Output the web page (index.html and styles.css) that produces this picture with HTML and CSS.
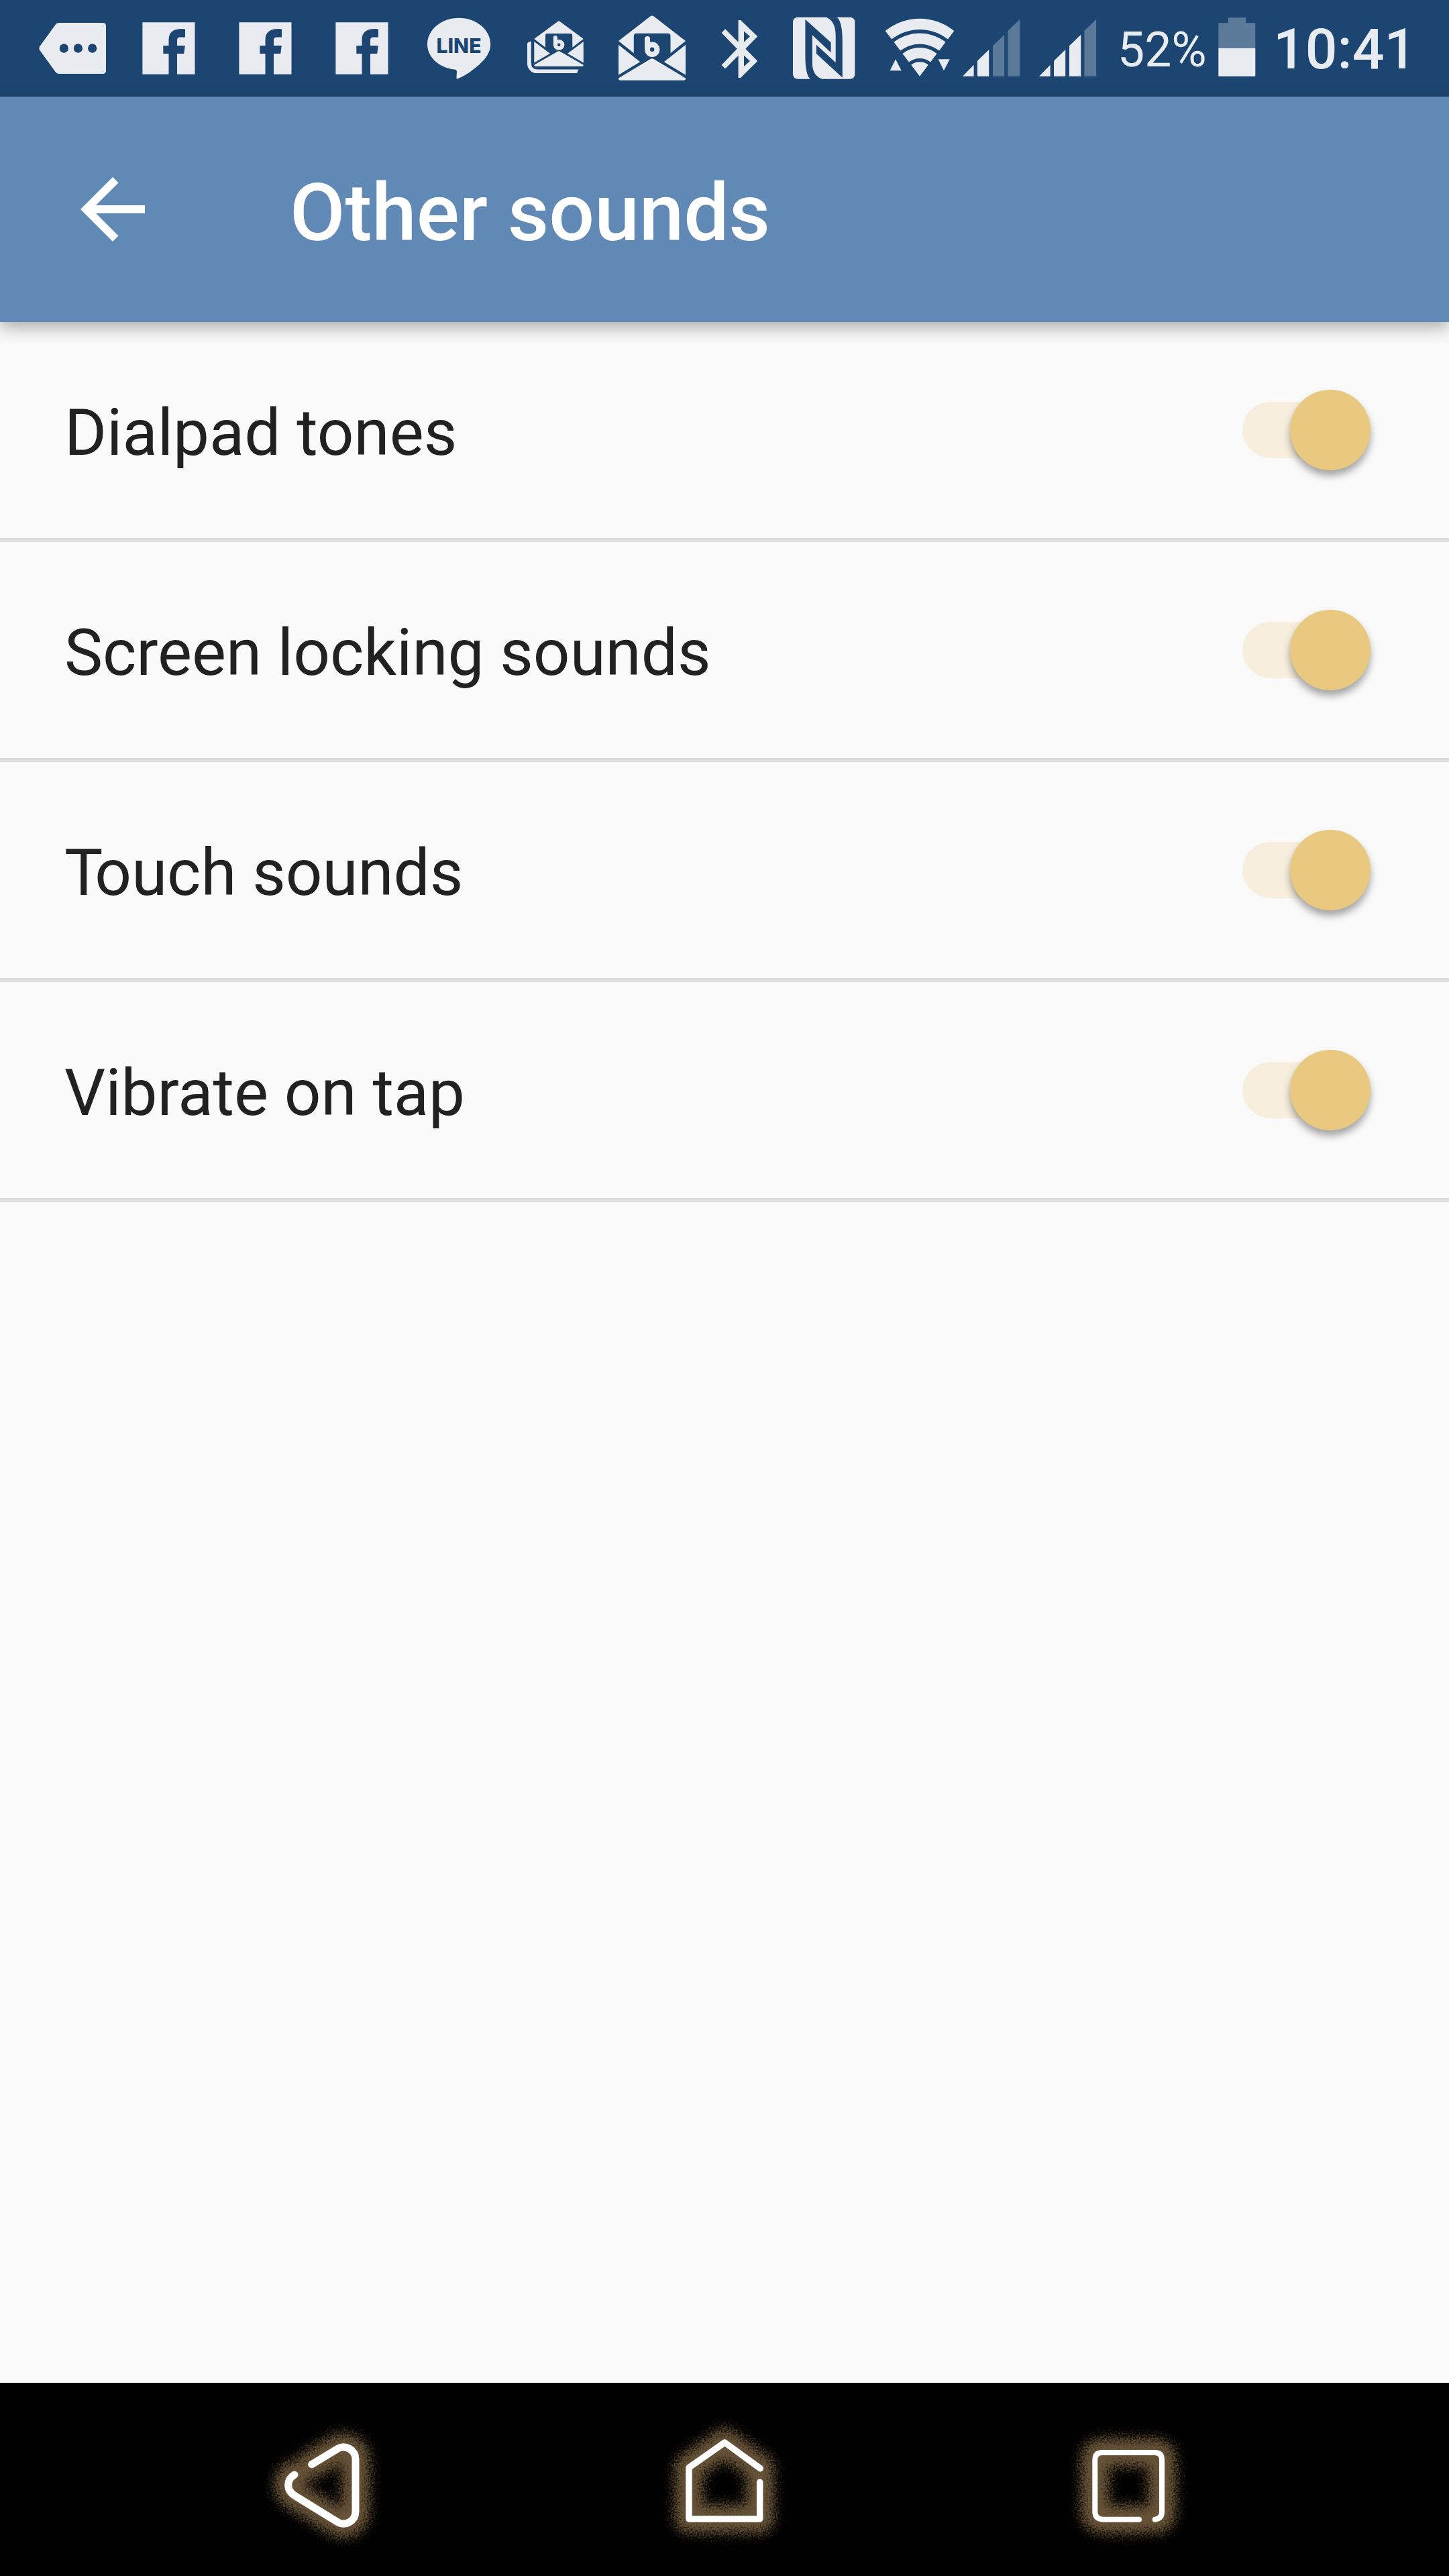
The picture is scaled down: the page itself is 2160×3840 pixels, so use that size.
FILE: index.html
```html
<!DOCTYPE html>
<html lang="en">
<head>
  <meta charset="UTF-8">
  <meta name="viewport" content="width=device-width, initial-scale=1.0">
  <title>Other sounds</title>
  <link rel="stylesheet" href="styles.css">
</head>
<body>
<svg class="defs" width="0" height="0">
  <defs>
    <symbol id="facebook" viewBox="0 0 144 144">
      <path d="M32.4 33.2H110.5V110.8H84V80H94.2L95.8 68H84V60Q84 55.5 88.5 55.5H96V43.4Q92 42.8 87 43.3Q71.5 45 71.5 59V68H63.3V80H71.5V110.8H32.4Z"/>
    </symbol>
    <symbol id="mail" viewBox="0 0 144 144">
      <path d="M22 61L69.5 24.3Q72 22.5 74.5 24.3L122 61L99.5 79.3V54Q99.5 49.8 95 49.8H49Q44.8 49.8 44.8 54V79.3Z"/>
      <path d="M22 66.7L54.2 92.3L22 111.7ZM122 66.7L89.8 92.3L122 111.7Z"/>
      <path d="M22 116.5L69.5 88Q72 86.4 74.5 88L122 116.5Q122 119.7 119.5 119.7H24.5Q22 119.7 22 116.5Z"/>
      <path class="mail-mark" d="M65 58V74"/>
      <ellipse class="mail-mark" cx="72.2" cy="73.8" rx="7.2" ry="7.2"/>
    </symbol>
    <symbol id="signal" viewBox="0 0 114 144">
      <path d="M5 113.8L21.6 96.7V113.8ZM27 113.8V90.7L44.2 74V113.8Z"/>
      <path class="bar-three" d="M50 113.8V68.3L67.2 51.7V113.8Z"/>
      <path class="dim" d="M72.4 113.8V46L90.2 29V113.8Z"/>
    </symbol>
    <!-- grainy halo behind the navigation icons -->
    <filter id="glow" filterUnits="userSpaceOnUse" x="0" y="0" width="240" height="288" color-interpolation-filters="sRGB">
      <feGaussianBlur in="SourceGraphic" stdDeviation="8" result="soft"/>
      <feTurbulence type="fractalNoise" baseFrequency="0.4" numOctaves="2" seed="4" result="noise"/>
      <feDisplacementMap in="soft" in2="noise" scale="32" xChannelSelector="R" yChannelSelector="G"/>
    </filter>
  </defs>
</svg>

<div class="screen">
  <div class="status-bar">
    <svg class="status-icon" viewBox="0 0 144 144">
      <path d="M52 34H117Q122 34 122 39V105Q122 110 117 110H52Q48.5 110 46.5 107L23 74.5Q21.5 72 23 69.5L46.5 37Q48.5 34 52 34Z"/>
      <g class="cut">
        <ellipse cx="59.3" cy="72" rx="6.6" ry="6.8"/>
        <ellipse cx="80.4" cy="72" rx="6.6" ry="6.8"/>
        <ellipse cx="101.7" cy="72" rx="6.6" ry="6.8"/>
      </g>
    </svg>
    <svg class="status-icon"><use href="#facebook"/></svg>
    <svg class="status-icon"><use href="#facebook"/></svg>
    <svg class="status-icon"><use href="#facebook"/></svg>
    <svg class="status-icon" viewBox="0 0 144 144">
      <path d="M72 26.7C98 26.7 119.2 44 119.2 66C119.2 74 116 81 110 88.5C101 99 84 112 70.5 117.3Q68.3 118 68.4 116L69 107Q69 104 65.5 103.5C42 101 25 85 25 66C25 44 46 26.7 72 26.7Z"/>
      <text class="line-text cut" x="38.5" y="78.8" textLength="67" lengthAdjust="spacingAndGlyphs">LINE</text>
    </svg>
    <svg class="status-icon" viewBox="0 0 144 144">
      <use href="#mail" width="144" height="144" transform="translate(24.1 15.2) scale(.735 .7)"/>
      <path d="M30 65Q30 63 35.7 61.5V93Q35.7 103.5 45 103.5H106.5L104 109H43Q37 109 33.5 104Q30 100 30 95Z"/>
    </svg>
    <svg class="status-icon"><use href="#mail"/></svg>
    <svg class="status-icon bluetooth" viewBox="0 0 116 144">
      <path fill-rule="evenodd" d="M56.6 30H60L85.3 54.3L67.3 72.7L85.3 91L60 116H56.6V82.7L37 102.6L31.6 97L54.7 72.7L31.6 49L37 43.2L56.6 62.7ZM65 46.7V62.7L74 54.3ZM65 82.7V99L74 91Z"/>
    </svg>
    <svg class="status-icon nfc" viewBox="0 0 140 144">
      <rect x="22" y="25.8" width="92.4" height="92" rx="7"/>
      <path class="cut" d="M40.4 29L78.6 63.3V78.3L50.9 52.3V94Q50.9 113 66 118H48.1Q40.4 112 40.4 83.3Z"/>
      <path class="cut" d="M71.1 25.5Q85.7 31 85.7 53V93.3L56.9 66.7V80L95.8 115.7V62Q95.8 31 87 25.5Z"/>
    </svg>
    <svg class="status-icon wifi" viewBox="0 0 130 144">
      <path d="M19.7 46A81 81 0 0 1 122.3 46L113 58.6A67 67 0 0 0 29.2 58.6Z"/>
      <path d="M32.5 62.7A63 63 0 0 1 109.5 62.7L100.1 75.6A47 47 0 0 0 42.1 75.6Z"/>
      <path d="M45.4 80A40.6 40.6 0 0 1 96.6 80L87.1 92.6A25.6 25.6 0 0 0 55 92.6Z"/>
      <path d="M58.2 96.7A20.5 20.5 0 0 1 83.8 96.7L71 113.8Z"/>
      <path d="M35 88.3L43.7 105.3H26.7ZM98.6 88.2H115.8L107 105.3Z"/>
    </svg>
    <svg class="status-icon signal signal-weak"><use href="#signal"/></svg>
    <svg class="status-icon signal"><use href="#signal"/></svg>
    <span class="battery-text">52%</span>
    <svg class="status-icon battery" viewBox="0 0 76 144">
      <path class="dim" d="M24.7 26.2H51.2V34.3H65.3V72H10.3V34.3H24.7Z"/>
      <rect x="10.3" y="71.8" width="55" height="42"/>
    </svg>
    <span class="clock">10:41</span>
  </div>

  <header class="app-bar">
    <svg class="back-arrow" viewBox="0 0 24 24">
      <path d="M20 11H7.83l5.59-5.59L12 4l-8 8 8 8 1.41-1.41L7.83 13H20v-2z"/>
    </svg>
    <h1 class="title">Other sounds</h1>
  </header>

  <main class="settings">
    <div class="setting">
      <span class="label">Dialpad tones</span>
      <span class="switch"><span class="thumb"></span></span>
    </div>
    <div class="setting">
      <span class="label">Screen locking sounds</span>
      <span class="switch"><span class="thumb"></span></span>
    </div>
    <div class="setting">
      <span class="label"><span class="kern">T</span>ouch sounds</span>
      <span class="switch"><span class="thumb"></span></span>
    </div>
    <div class="setting">
      <span class="label">Vibrate on tap</span>
      <span class="switch"><span class="thumb"></span></span>
    </div>
  </main>

  <nav class="nav-bar">
    <svg class="nav-icon nav-back" viewBox="0 0 240 288">
      <defs>
        <path id="nav-back" d="M104.7 121.7L143 98.5C155 91.5 170 100 170 114V192C170 206 155 214.5 143 207.5L79 168C67 160.5 66 145 79 137"/>
      </defs>
      <use class="halo" href="#nav-back"/>
      <use class="line" href="#nav-back"/>
    </svg>
    <svg class="nav-icon nav-home" viewBox="0 0 240 288">
      <defs>
        <path id="nav-home" d="M172.7 148V203H67V126.3L120.3 89L173.3 127.7"/>
      </defs>
      <use class="halo" href="#nav-home"/>
      <use class="line" href="#nav-home"/>
    </svg>
    <svg class="nav-icon nav-recent" viewBox="0 0 240 288">
      <defs>
        <path id="nav-recent" d="M138 203.7H83Q72.3 202.5 72.3 192V115Q72.3 104 83 104H161Q172 104 172 115V192Q172 202.5 161.7 203.7"/>
      </defs>
      <use class="halo" href="#nav-recent"/>
      <use class="line" href="#nav-recent"/>
    </svg>
  </nav>
</div>
</body>
</html>
```
FILE: styles.css
```css
* {
  box-sizing: border-box;
}

body {
  margin: 0;
  font-family: Roboto, sans-serif;
  background-color: #fafafa;
}

.defs {
  position: absolute;
}

.screen {
  display: flex;
  flex-direction: column;
  width: 2160px;
  height: 3840px;
  overflow: hidden;
}

/* Status bar */
.status-bar {
  display: flex;
  align-items: center;
  height: 144px;
  padding-left: 36px;
  background-color: #1d4571;
  color: #e8ebf0;
}

.status-icon {
  flex: none;
  width: 144px;
  height: 144px;
  fill: #e8ebf0;
}

.bluetooth {
  width: 116px;
}

.nfc {
  width: 140px;
}

.wifi {
  width: 130px;
}

.signal {
  width: 114px;
}

.battery {
  width: 76px;
}

.cut {
  fill: #1d4571;
}

.dim {
  fill: #5b7998;
}

.signal-weak {
  --bar-three: #5b7998;
}

.bar-three {
  fill: var(--bar-three, #e8ebf0);
}

.mail-mark {
  fill: none;
  stroke: #e8ebf0;
  stroke-width: 8;
  stroke-linecap: round;
}

.line-text {
  font-family: Inter, sans-serif;
  font-size: 30.5px;
  font-weight: 800;
}

.battery-text {
  width: 148px;
  padding-top: 6px;
  padding-left: 8px;
  font-size: 71.5px;
  line-height: 144px;
}

.clock {
  padding-top: 4px;
  padding-left: 16px;
  font-size: 84px;
  font-weight: 500;
  line-height: 144px;
}

/* App bar */
.app-bar {
  display: flex;
  align-items: flex-start;
  flex: none;
  height: 336px;
  padding: 96px 96px 0;
  background-color: #6189b6;
  box-shadow: 0 8px 24px rgba(0, 0, 0, 0.32);
  color: #fff;
}

.back-arrow {
  width: 144px;
  height: 144px;
  fill: #fff;
}

.title {
  margin: 2px 0 0 192px;
  font-size: 119.6px;
  font-weight: 500;
  line-height: 150px;
}

/* Settings list */
.settings {
  flex: 1;
}

.setting {
  display: flex;
  align-items: center;
  justify-content: space-between;
  height: 328px;
  padding: 0 117px 0 96px;
  border-bottom: 6px solid #dcdcdc;
}

.label {
  padding-top: 8px;
  font-size: 96.1px;
  color: #212121;
}

.kern {
  letter-spacing: -12px;
}

.switch {
  display: flex;
  align-items: center;
  justify-content: flex-end;
  width: 191px;
  height: 84px;
  border-radius: 42px;
  background-color: #f7eedd;
}

.thumb {
  flex: none;
  width: 120px;
  height: 120px;
  border-radius: 50%;
  background-color: #e9c880;
  box-shadow: 0 8px 12px rgba(0, 0, 0, 0.35);
}

/* Navigation bar */
.nav-bar {
  display: flex;
  justify-content: space-between;
  height: 288px;
  padding: 0 360px;
  background-color: #000;
}

.nav-icon {
  width: 240px;
  height: 288px;
  fill: none;
  stroke-linecap: round;
  stroke-linejoin: round;
}

.halo {
  stroke: #665237;
  stroke-width: 42px;
  filter: url(#glow);
}

.line {
  stroke: #fff;
}

.nav-back .line {
  stroke-width: 11px;
}

.nav-home .line {
  stroke-width: 9.5px;
}

.nav-recent .line {
  stroke-width: 8px;
}
```
